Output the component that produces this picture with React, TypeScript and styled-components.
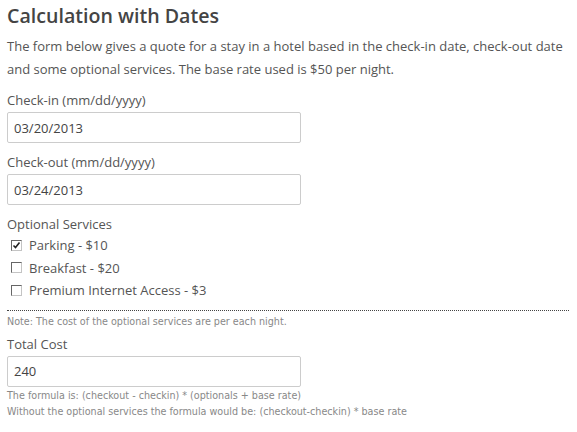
import styled, { createGlobalStyle } from 'styled-components';
import { useState } from "react";

const GlobalStyle = createGlobalStyle`
    body {
        margin: 0;
        background: #fff;
        font-family: "Open Sans", "Liberation Sans", sans-serif;
        color: #444;
    }
`
const Page = styled.div`
    padding: 2px 8px 0 7px;
`
const Title = styled.h2`
    margin: 0;
    font-size: 19.6px;
    line-height: 28px;
    font-weight: 600;
    color: #444;
`
const Intro = styled.p`
    margin: 5px 0 8px 0;
    font-size: 13px;
    line-height: 23px;
    color: #555;
`
const Field = styled.div<{ $gap?: number }>`
    display: flex;
    flex-direction: column;
    margin-bottom: ${(p) => p.$gap ?? 8}px;
`
const Label = styled.label`
    font-size: 13px;
    line-height: 23px;
    color: #555;
`
const TextInput = styled.input`
    box-sizing: border-box;
    width: 294px;
    height: 31px;
    padding: 0 6px;
    border: 1px solid #ccc;
    border-radius: 2px;
    font-family: "Open Sans", "Liberation Sans", sans-serif;
    font-size: 13px;
    color: #444;
    outline: none;
`
const Services = styled.div`
    display: flex;
    flex-direction: column;
`
const OptionList = styled.div`
    display: flex;
    flex-direction: column;
    margin-top: -2px;
`
const Option = styled.label`
    display: flex;
    align-items: center;
    gap: 7px;
    padding-left: 4px;
    font-size: 13px;
    line-height: 22.5px;
    color: #555;
    cursor: pointer;
`
const Box = styled.span`
    box-sizing: border-box;
    width: 11px;
    height: 11px;
    border: 1px solid #666;
    border-right-color: #c4c4c4;
    border-bottom-color: #c4c4c4;
    background: #fff;
    display: flex;
    align-items: center;
    justify-content: center;
`
const Divider = styled.hr`
    margin: 8px 0 0 0;
    border: none;
    border-top: 1px dotted #444;
`
const Small = styled.div`
    font-family: "DejaVu Sans", Verdana, sans-serif;
    font-size: 9.6px;
    line-height: 16px;
    color: #888;
`
const NoteText = styled(Small)`
    margin: 3px 0 3px 0;
`

export default function App() {
    const [checkin, setCheckin] = useState('03/20/2013');
    const [checkout, setCheckout] = useState('03/24/2013');
    const [opts, setOpts] = useState([true, false, false]);

    const services = [
        { name: 'Parking - $10', price: 10 },
        { name: 'Breakfast - $20', price: 20 },
        { name: 'Premium Internet Access - $3', price: 3 },
    ];

    const days = Math.round((new Date(checkout).getTime() - new Date(checkin).getTime()) / 86400000);
    const extras = services.reduce((s, o, i) => s + (opts[i] ? o.price : 0), 0);
    const total = isNaN(days) ? '' : String(days * (extras + 50));

    return (
        <Page>
            <GlobalStyle />
            <Title>Calculation with Dates</Title>
            <Intro>
                The form below gives a quote for a stay in a hotel based in the check-in date, check-out date
                and some optional services. The base rate used is $50 per night.
            </Intro>
            <Field>
                <Label>Check-in (mm/dd/yyyy)</Label>
                <TextInput value={checkin} onChange={(e) => setCheckin(e.target.value)} />
            </Field>
            <Field>
                <Label>Check-out (mm/dd/yyyy)</Label>
                <TextInput value={checkout} onChange={(e) => setCheckout(e.target.value)} />
            </Field>
            <Services>
                <Label>Optional Services</Label>
                <OptionList>
                    {services.map((s, i) => (
                        <Option key={s.name} onClick={() => setOpts(opts.map((v, j) => j === i ? !v : v))}>
                            <Box>
                                {opts[i] && (
                                    <svg width="9" height="9" viewBox="0 0 9 9">
                                        <path d="M1.5 4.5 L3.5 6.5 L7.5 1.5" stroke="#222" strokeWidth="1.6" fill="none" />
                                    </svg>
                                )}
                            </Box>
                            {s.name}
                        </Option>
                    ))}
                </OptionList>
            </Services>
            <Divider />
            <NoteText>Note: The cost of the optional services are per each night.</NoteText>
            <Field $gap={1}>
                <Label>Total Cost</Label>
                <TextInput value={total} readOnly />
            </Field>
            <Small>The formula is: (checkout - checkin) * (optionals + base rate)</Small>
            <Small>Without the optional services the formula would be: (checkout-checkin) * base rate</Small>
        </Page>
    );
}
